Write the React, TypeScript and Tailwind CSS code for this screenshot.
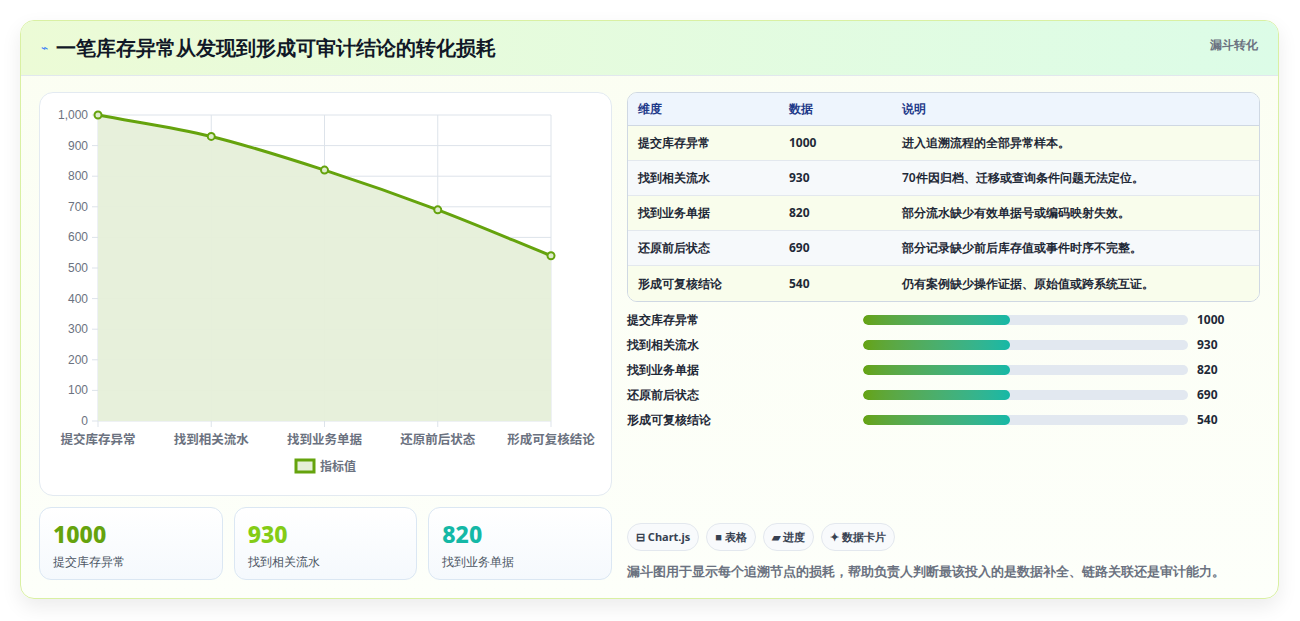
import React from "react";

const rows = [
  ["提交库存异常", 1000, "进入追溯流程的全部异常样本。"],
  ["找到相关流水", 930, "70件因归档、迁移或查询条件问题无法定位。"],
  ["找到业务单据", 820, "部分流水缺少有效单据号或编码映射失效。"],
  ["还原前后状态", 690, "部分记录缺少前后库存值或事件时序不完整。"],
  ["形成可复核结论", 540, "仍有案例缺少操作证据、原始值或跨系统互证。"],
] as const;

function Chart() {
  const x0 = 58, x1 = 511, yTop = 22, yBot = 328;
  const xs = [0, 1, 2, 3, 4].map((i) => x0 + ((x1 - x0) / 4) * i);
  const y = (v: number) => yBot - ((yBot - yTop) * v) / 1000;
  const pts = rows.map((r, i) => [xs[i], y(r[1])] as const);
  const n = pts.length;
  const slope = pts.map((p, i) => {
    const a = pts[Math.max(0, i - 1)];
    const b = pts[Math.min(n - 1, i + 1)];
    return (b[1] - a[1]) / (b[0] - a[0]);
  });
  let d = `M${pts[0][0]},${pts[0][1]}`;
  for (let i = 1; i < n; i++) {
    const [px, py] = pts[i - 1];
    const [cx, cy] = pts[i];
    const dx = (cx - px) / 3;
    d += ` C${px + dx},${py + slope[i - 1] * dx} ${cx - dx},${cy - slope[i] * dx} ${cx},${cy}`;
  }
  const area = `${d} L${x1},${yBot} L${x0},${yBot} Z`;
  const ticks = [0, 100, 200, 300, 400, 500, 600, 700, 800, 900, 1000];
  return (
    <svg width="572" height="403" className="block">
      {ticks.map((t) => (
        <g key={t}>
          <line x1={x0 - 6} x2={x1} y1={y(t)} y2={y(t)} stroke="#dde3ea" strokeWidth="1" />
          <text x={x0 - 10} y={y(t) + 4} textAnchor="end" fontSize="12" fill="#6b7280" fontFamily="Liberation Sans, sans-serif">
            {t === 1000 ? "1,000" : t}
          </text>
        </g>
      ))}
      {xs.map((x) => (
        <line key={x} x1={x} x2={x} y1={yTop} y2={yBot + 6} stroke="#dde3ea" strokeWidth="1" />
      ))}
      <path d={area} fill="#e6efd9" opacity="0.95" />
      <path d={d} fill="none" stroke="#65a30d" strokeWidth="3" />
      {pts.map(([px, py], i) => (
        <circle key={i} cx={px} cy={py} r="3.5" fill="#dfeccd" stroke="#65a30d" strokeWidth="2" />
      ))}
      {rows.map((r, i) => (
        <text key={i} x={xs[i]} y={351} textAnchor="middle" fontSize="12.5" fontWeight="700" fill="#6b7280" fontFamily="Noto Sans CJK SC, sans-serif">
          {r[0]}
        </text>
      ))}
      <rect x={256} y={367} width={18} height={12} fill="#e6efd9" stroke="#65a30d" strokeWidth="3" />
      <text x={280} y={378} fontSize="12" fontWeight="700" fill="#6b7280" fontFamily="Noto Sans CJK SC, sans-serif">指标值</text>
    </svg>
  );
}

export default function App() {
  return (
    <div className="w-[1300px] h-[621px] bg-white p-[20px] font-['Noto_Sans','Noto_Sans_CJK_SC',sans-serif]">
      <div className="w-[1259px] h-[579px] rounded-[14px] border border-[#d9f0a3] shadow-[0_8px_20px_rgba(0,0,0,0.08)] bg-gradient-to-b from-[#fbfef2] to-[#fdfffa] overflow-hidden">
        <div className="h-[55px] flex items-center justify-between px-[20px] bg-gradient-to-r from-[#ecfbd6] to-[#dcfce7] border-b border-[#e2e8ee]">
          <div className="flex items-center gap-[8px]">
            <span className="text-[12px] text-[#3b82f6]">⌁</span>
            <span className="text-[20px] font-bold text-[#111827]">一笔库存异常从发现到形成可审计结论的转化损耗</span>
          </div>
          <span className="text-[12px] font-bold text-[#6b7280] self-start mt-[15px]">漏斗转化</span>
        </div>
        <div className="flex gap-[15px] px-[18px] pt-[16px]">
          <div className="w-[573px] flex flex-col gap-[11px]">
            <div className="h-[404px] bg-white rounded-[14px] border border-[#e3eaf1]">
              <Chart />
            </div>
            <div className="grid grid-cols-3 gap-[11px]">
              {[["1000", "提交库存异常", "text-[#65a30d]"], ["930", "找到相关流水", "text-[#84cc16]"], ["820", "找到业务单据", "text-[#14b8a6]"]].map(([v, l, c]) => (
                <div key={v} className="h-[73px] rounded-[12px] border border-[#dbe7f3] bg-gradient-to-b from-white to-[#f5f9fd] px-[13px] pt-[12px]">
                  <div className={`text-[23px] font-extrabold leading-[28px] ${c}`}>{v}</div>
                  <div className="text-[12px] text-[#4b5563] mt-[5px]">{l}</div>
                </div>
              ))}
            </div>
          </div>
          <div className="w-[634px] flex flex-col">
            <div className="rounded-[10px] border border-[#cfd8e3] overflow-hidden text-[12px] font-bold">
              <div className="h-[33px] flex items-center bg-[#eef5fd] text-[#1e3a8a] border-b border-[#cfd8e3]">
                <span className="w-[161px] pl-[10px]">维度</span>
                <span className="w-[113px]">数据</span>
                <span>说明</span>
              </div>
              {rows.map((r, i) => (
                <div key={i} className={`h-[35px] flex items-center text-[#1f2937] ${i % 2 ? "bg-[#f6f9fb]" : "bg-[#f9fdec]"} ${i < 4 ? "border-b border-[#e3e8ee]" : ""}`}>
                  <span className="w-[161px] pl-[10px]">{r[0]}</span>
                  <span className="w-[113px]">{r[1]}</span>
                  <span className="font-semibold">{r[2]}</span>
                </div>
              ))}
            </div>
            <div className="mt-[9px] flex flex-col gap-[7px]">
              {rows.map((r, i) => (
                <div key={i} className="h-[18px] flex items-center text-[12px] font-bold text-[#1f2937]">
                  <span className="w-[236px]">{r[0]}</span>
                  <div className="w-[325px] h-[10px] rounded-full bg-[#e2e8f0] overflow-hidden">
                    <div className="w-[147px] h-full rounded-full bg-gradient-to-r from-[#65a30d] to-[#14b8a6]" />
                  </div>
                  <span className="ml-[9px]">{r[1]}</span>
                </div>
              ))}
            </div>
            <div className="mt-[94px] flex gap-[7px] text-[11px] font-bold text-[#374151]">
              {["⊟ Chart.js", "■ 表格", "▰ 进度", "✦ 数据卡片"].map((c) => (
                <span key={c} className="h-[28px] px-[8px] flex items-center rounded-full border border-[#e3e8ee] bg-[#f8fafc]">{c}</span>
              ))}
            </div>
            <div className="mt-[11px] text-[13px] font-semibold text-[#6b7280]">漏斗图用于显示每个追溯节点的损耗，帮助负责人判断最该投入的是数据补全、链路关联还是审计能力。</div>
          </div>
        </div>
      </div>
    </div>
  );
}
